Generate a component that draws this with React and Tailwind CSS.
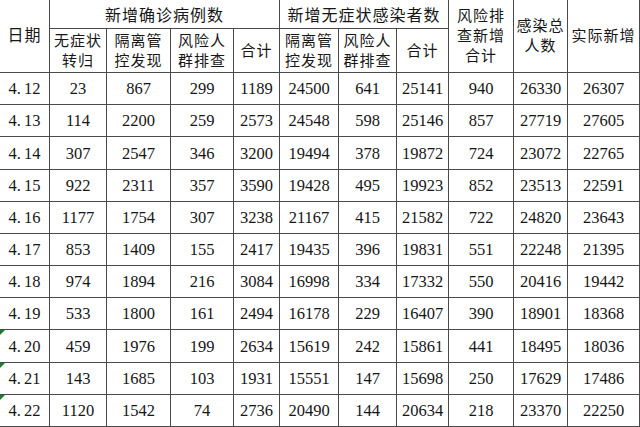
import React from "react";

const rows = [
  ["4.12", "23", "867", "299", "1189", "24500", "641", "25141", "940", "26330", "26307"],
  ["4.13", "114", "2200", "259", "2573", "24548", "598", "25146", "857", "27719", "27605"],
  ["4.14", "307", "2547", "346", "3200", "19494", "378", "19872", "724", "23072", "22765"],
  ["4.15", "922", "2311", "357", "3590", "19428", "495", "19923", "852", "23513", "22591"],
  ["4.16", "1177", "1754", "307", "3238", "21167", "415", "21582", "722", "24820", "23643"],
  ["4.17", "853", "1409", "155", "2417", "19435", "396", "19831", "551", "22248", "21395"],
  ["4.18", "974", "1894", "216", "3084", "16998", "334", "17332", "550", "20416", "19442"],
  ["4.19", "533", "1800", "161", "2494", "16178", "229", "16407", "390", "18901", "18368"],
  ["4.20", "459", "1976", "199", "2634", "15619", "242", "15861", "441", "18495", "18036"],
  ["4.21", "143", "1685", "103", "1931", "15551", "147", "15698", "250", "17629", "17486"],
  ["4.22", "1120", "1542", "74", "2736", "20490", "144", "20634", "218", "23370", "22250"],
];

const flagged = new Set(["4.20", "4.21", "4.22"]);

function H({ className = "", children }) {
  return (
    <div className={"bg-white flex items-center justify-center text-center text-[15px] leading-[20px] tracking-[1px] " + className}>
      {children}
    </div>
  );
}

export default function App() {
  return (
    <div
      className="w-[640px] h-[427px] bg-[#4a4a4a] pr-px pb-px text-[#161616]"
      style={{ fontFamily: '"Liberation Serif", "Noto Sans CJK SC", serif' }}
    >
      <div className="grid h-full gap-px grid-cols-[49px_56px_63px_62px_45px_58px_57px_51px_64px_53px_71px] grid-rows-[28px_43px_repeat(11,1fr)]">
        <H className="row-span-2 text-[16px]">日期</H>
        <H className="col-span-4 text-[16px] pt-[3px]">新增确诊病例数</H>
        <H className="col-span-3 text-[16px] pt-[3px]">新增无症状感染者数</H>
        <H className="row-span-2">
          风险排<br />查新增<br />合计
        </H>
        <H className="row-span-2">
          感染总<br />人数
        </H>
        <H className="row-span-2">实际新增</H>
        <H>无症状<br />转归</H>
        <H>隔离管<br />控发现</H>
        <H>风险人<br />群排查</H>
        <H>合计</H>
        <H>隔离管<br />控发现</H>
        <H>风险人<br />群排查</H>
        <H>合计</H>
        {rows.map((r) => (
          <React.Fragment key={r[0]}>
            <div className="relative bg-white flex items-center justify-center text-[16.5px] pt-[2px]">
              {flagged.has(r[0]) && (
                <span className="absolute left-0 top-0 w-0 h-0 border-t-[5px] border-t-[#1e7a2e] border-r-[5px] border-r-transparent" />
              )}
              <span>
                {r[0].slice(0, 2)}
                <span className="ml-[3px]">{r[0].slice(2)}</span>
              </span>
            </div>
            {r.slice(1).map((v, i) => (
              <div key={i} className="bg-white flex items-center justify-center text-[16.5px] pt-[2px]">
                {v}
              </div>
            ))}
          </React.Fragment>
        ))}
      </div>
    </div>
  );
}
